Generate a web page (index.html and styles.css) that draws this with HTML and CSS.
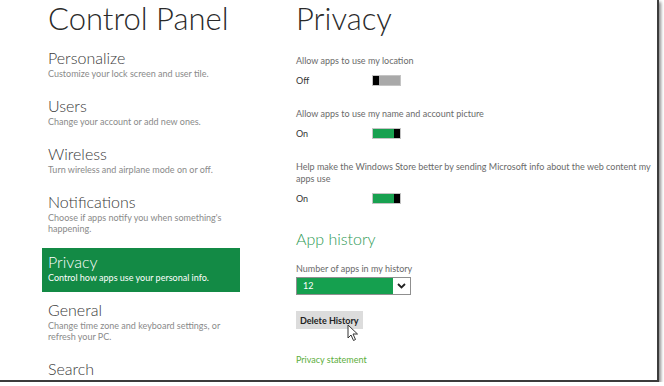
FILE: index.html
```html
<!DOCTYPE html>
<html lang="en">
<head>
    <meta charset="UTF-8">
    <title>Control Panel - Privacy</title>
    <link rel="stylesheet" href="styles.css">
</head>
<body>
    <div class="frame">
        <div class="panel">
            <nav class="nav">
                <h1 class="nav-title">Control Panel</h1>
                <div class="nav-item">
                    <div class="item-name">Personalize</div>
                    <div class="item-desc">Customize your lock screen and user tile.</div>
                </div>
                <div class="nav-item">
                    <div class="item-name">Users</div>
                    <div class="item-desc">Change your account or add new ones.</div>
                </div>
                <div class="nav-item">
                    <div class="item-name">Wireless</div>
                    <div class="item-desc">Turn wireless and airplane mode on or off.</div>
                </div>
                <div class="nav-item">
                    <div class="item-name">Notifications</div>
                    <div class="item-desc">Choose if apps notify you when something's happening.</div>
                </div>
                <div class="nav-item selected">
                    <div class="item-name">Privacy</div>
                    <div class="item-desc">Control how apps use your personal info.</div>
                </div>
                <div class="nav-item">
                    <div class="item-name">General</div>
                    <div class="item-desc">Change time zone and keyboard settings, or refresh your PC.</div>
                </div>
                <div class="nav-item">
                    <div class="item-name">Search</div>
                </div>
            </nav>
            <main class="content">
                <h1 class="page-title">Privacy</h1>

                <div class="setting">
                    <div class="setting-label">Allow apps to use my location</div>
                    <div class="toggle-row">
                        <span class="state">Off</span>
                        <span class="toggle off"><span class="thumb"></span></span>
                    </div>
                </div>

                <div class="setting">
                    <div class="setting-label">Allow apps to use my name and account picture</div>
                    <div class="toggle-row">
                        <span class="state">On</span>
                        <span class="toggle on"><span class="thumb"></span></span>
                    </div>
                </div>

                <div class="setting">
                    <div class="setting-label">Help make the Windows Store better by sending Microsoft info about the web content my apps use</div>
                    <div class="toggle-row">
                        <span class="state">On</span>
                        <span class="toggle on"><span class="thumb"></span></span>
                    </div>
                </div>

                <h2 class="section-title">App history</h2>
                <div class="setting-label">Number of apps in my history</div>
                <div class="select">
                    <span class="select-value">12</span>
                    <span class="select-arrow">
                        <svg width="9" height="6" viewBox="0 0 9 6"><path d="M1 1l3.5 3.5L8 1" fill="none" stroke="#222" stroke-width="1.8"/></svg>
                    </span>
                </div>

                <div class="button-wrap">
                    <button class="button">Delete History</button>
                    <svg class="cursor" width="12" height="18" viewBox="0 0 12 18">
                        <path d="M1 1v13l3-3 2.5 5.5 2-1L6 10h4.5z" fill="#fff" stroke="#333" stroke-width="1"/>
                    </svg>
                </div>

                <a class="link" href="#">Privacy statement</a>
            </main>
        </div>
    </div>
</body>
</html>
```

FILE: styles.css
```css
body {
    margin: 0;
    background: #fff;
    font-family: 'Segoe UI', Lato, 'Open Sans', Arial, sans-serif;
    color: #333;
}
.frame {
    width: 657px;
    height: 380px;
    border-right: 2px solid #3c3c3c;
    border-bottom: 2px solid #3c3c3c;
    box-shadow: 2px 2px 3px rgba(0,0,0,0.45);
    overflow: hidden;
    background: #fff;
}
.panel {
    display: grid;
    grid-template-columns: 198px 1fr;
    column-gap: 56px;
    padding-left: 42px;
}
.nav-title,
.page-title {
    margin: 0;
    font-size: 31px;
    font-weight: 300;
    line-height: 37px;
    color: #2a2a2a;
    white-space: nowrap;
}
.nav-title {
    padding-left: 6px;
    margin-bottom: 10px;
}
.nav-item {
    padding: 1px 6px 4px 6px;
    margin-bottom: 12px;
}
.item-name {
    font-size: 16px;
    font-weight: 300;
    line-height: 20px;
    color: #3a3a3a;
}
.item-desc {
    font-size: 9px;
    line-height: 11px;
    color: #8a8a8a;
}
.nav-item.selected {
    background: #138a45;
    margin-top: -2px;
    margin-bottom: 7px;
    padding-top: 4px;
    padding-bottom: 9px;
}
.nav-item.selected .item-name,
.nav-item.selected .item-desc {
    color: #fff;
}
.page-title {
    margin-bottom: 18px;
}
.setting {
    margin-bottom: 22px;
}
.setting-label {
    font-size: 9px;
    line-height: 12px;
    color: #6a6a6a;
    margin-bottom: 8px;
    max-width: 360px;
}
.toggle-row {
    display: flex;
    align-items: center;
}
.state {
    width: 76px;
    font-size: 9px;
    color: #333;
}
.toggle {
    display: flex;
    width: 27px;
    height: 9px;
    border: 1px solid #c4c4c4;
    background: #a9a9a9;
}
.toggle .thumb {
    width: 6px;
    background: #000;
}
.toggle.on {
    background: #18a150;
    justify-content: flex-end;
}
.section-title {
    margin: 25px 0 14px;
    font-size: 16px;
    font-weight: 300;
    line-height: 20px;
    color: #2e9a55;
}
.select {
    display: flex;
    width: 113px;
    height: 16px;
    border: 1px solid #8f8f8f;
    margin-top: -6px;
}
.select-value {
    flex: 1;
    background: #15a04f;
    color: #fff;
    font-size: 9px;
    line-height: 16px;
    padding-left: 6px;
}
.select-arrow {
    width: 17px;
    display: flex;
    align-items: center;
    justify-content: center;
    background: #fff;
}
.button-wrap {
    position: relative;
    width: 64px;
    margin-top: 16px;
}
.button {
    display: block;
    border: none;
    background: #dcdcdc;
    font-family: inherit;
    font-size: 9px;
    font-weight: 700;
    color: #222;
    height: 18px;
    padding: 0 4px;
    white-space: nowrap;
}
.cursor {
    position: absolute;
    left: 51px;
    top: 13px;
}
.link {
    display: block;
    margin-top: 25px;
    font-size: 9px;
    color: #5cae3c;
    text-decoration: none;
}
```
